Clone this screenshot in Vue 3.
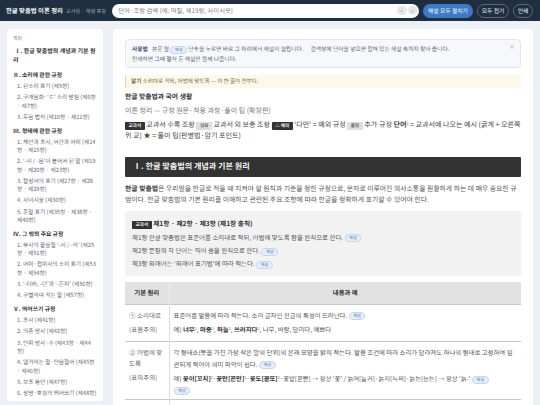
<script setup>
const toc = [
  { h: 'Ⅱ. 소리에 관한 규정', items: ['1. 된소리 표기 (제5항)', '2. 구개음화·‘ㄷ’ 소리 받침 (제6항 · 제7항)', '3. 두음 법칙 (제10항 · 제11항)'] },
  { h: 'Ⅲ. 형태에 관한 규정', items: ['1. 체언과 조사, 어간과 어미 (제14항 · 제15항)', '2. ‘-이 / -음’이 붙어서 된 말 (제19항 · 제20항 · 제23항)', '3. 합성어의 표기 (제27항 · 제28항 · 제29항)', '4. 사이시옷 (제30항)', '5. 준말 표기 (제35항 · 제38항 · 제40항)'] },
  { h: 'Ⅳ. 그 밖의 주요 규정', items: ['1. 부사의 끝음절 ‘-이 / -히’ (제25항 · 제51항)', '2. 어미·접미사의 소리 표기 (제53항 · 제54항)', '3. ‘-더라, -던’과 ‘-든지’ (제56항)', '4. 구별하여 적는 말 (제57항)'] },
  { h: 'Ⅴ. 띄어쓰기 규정', items: ['1. 조사 (제41항)', '2. 의존 명사 (제42항)', '3. 단위 명사·수 (제43항 · 제44항)', '4. 열거하는 말·단음절어 (제45항 · 제46항)', '5. 보조 용언 (제47항)', '6. 성명·호칭의 띄어쓰기 (제48항)'] }
]
</script>

<template>
  <div class="page">
    <header class="top">
      <div class="brand"><strong>한글 맞춤법 이론 정리</strong><span>교사용 · 해설 포함</span></div>
      <div class="search">
        <span class="ph">단어·조항 검색 (예: 며칠, 제19항, 사이시옷)</span>
        <span class="arrow">‹</span><span class="arrow">›</span>
      </div>
      <button class="btn primary">해설 모두 펼치기</button>
      <button class="btn ghost">모두 접기</button>
      <button class="btn ghost print">인쇄</button>
    </header>
    <div class="body">
      <aside class="side">
        <div class="side-title">목차</div>
        <div class="first">Ⅰ. 한글 맞춤법의 개념과 기본 원리</div>
        <section v-for="g in toc" :key="g.h">
          <div class="group">{{ g.h }}</div>
          <div v-for="i in g.items" :key="i" class="item">{{ i }}</div>
        </section>
      </aside>
      <main class="main">
        <div class="tip">
          <p><b>사용법</b><span class="gap"></span>본문 옆 <span class="chip">해설</span> 단추를 누르면 바로 그 자리에서 해설이 열립니다.<span class="gap wide"></span>검색창에 단어를 넣으면 접혀 있는 해설 속까지 찾아 줍니다.</p>
          <p>인쇄하면 그때 펼쳐 둔 해설만 함께 나옵니다.</p>
          <span class="close">×</span>
        </div>
        <div class="note"><b>알기</b> 소리대로 적되, 어법에 맞도록 — 이 한 줄이 전부다.</div>
        <h2 class="title">한글 맞춤법과 국어 생활</h2>
        <div class="sub">이론 정리 — 규정 원문·적용 과정·풀이 팁 (확장판)</div>
        <p class="legend"><span class="tag dark">교과서</span> 교과서 수록 조항 <span class="tag gray">심화</span> 교과서 외 보충 조항 <span class="tag dark">△ 예외</span> ‘다만’ = 예외 규정 <span class="tag gray">붙임</span> 추가 규정 <b>단어</b><sup>2</sup> = 교과서에 나오는 예시 (굵게 + 오른쪽 위 교) ★ = 풀이 팁(판별법·암기 포인트)</p>
        <h2 class="band">Ⅰ. 한글 맞춤법의 개념과 기본 원리</h2>
        <p class="para"><b>한글 맞춤법</b>은 우리말을 한글로 적을 때 지켜야 할 원칙과 기준을 정한 규정으로, 문자로 이루어진 의사소통을 원활하게 하는 데 매우 중요한 규범이다. 한글 맞춤법의 기본 원리를 이해하고 관련된 주요 조항에 따라 한글을 정확하게 표기할 수 있어야 한다.</p>
        <div class="rule">
          <div class="rule-h"><span class="tag dark">교과서</span> <b>제1항 · 제2항 · 제3항 (제1장 총칙)</b></div>
          <p>제1항 한글 맞춤법은 표준어를 소리대로 적되, 어법에 맞도록 함을 원칙으로 한다. <span class="chip">해설</span></p>
          <p>제2항 문장의 각 단어는 띄어 씀을 원칙으로 한다. <span class="chip">해설</span></p>
          <p>제3항 외래어는 ‘외래어 표기법’에 따라 적는다. <span class="chip">해설</span></p>
        </div>
        <table class="tbl">
          <colgroup><col class="c1" /><col /></colgroup>
          <thead><tr><th>기본 원리</th><th>내용과 예</th></tr></thead>
          <tbody>
            <tr>
              <td class="lab"><p>① 소리대로</p><p>(표음주의)</p></td>
              <td><p>표준어를 발음에 따라 적는다. 소리 글자인 한글의 특성이 드러난다. <span class="chip">해설</span></p>
                <p>예) <b>너무</b><sup>2</sup>, <b>마중</b><sup>2</sup>, <b>하늘</b><sup>2</sup>, <b>쓰러지다</b><sup>2</sup>, 나무, 바람, 달리다, 예쁘다</p></td>
            </tr>
            <tr>
              <td class="lab"><p>② 어법에 맞도록</p><p>(표의주의)</p></td>
              <td><p>각 형태소(뜻을 가진 가장 작은 말의 단위)의 본래 모양을 밝혀 적는다. 발음 조건에 따라 소리가 달라져도 하나의 형태로 고정하여 일관되게 적어야 의미 파악이 쉽다. <span class="chip">해설</span></p>
                <p class="ex">예) <b>꽃이[꼬치]</b><sup>2</sup>·<b>꽃만[꼰만]</b><sup>2</sup>·<b>꽃도[꼳또]</b><sup>2</sup>·꽃밭[꼳빧] → 항상 ‘꽃’ / 늙어[늘거]·늙지[늑찌]·늙는[능는] → 항상 ‘늙-’ <span class="chip">해설</span><br /><span class="chip">해설</span></p></td>
            </tr>
            <tr class="last"><td class="lab"></td><td></td></tr>
          </tbody>
        </table>
      </main>
    </div>
  </div>
</template>

<style>
html, body { margin: 0; background: #edf0f4; overflow: hidden; }
</style>

<style scoped>
.page { width: 540px; height: 405px; overflow: hidden; display: flex; flex-direction: column; background: #edf0f4; font-family: "Noto Sans CJK KR", "Noto Sans", sans-serif; color: #333; text-rendering: geometricPrecision; }
.top { flex: none; height: 21px; box-sizing: border-box; background: #1f2e40; display: flex; align-items: center; gap: 4px; padding: 0 7px 0 6px; }
.brand { display: flex; align-items: baseline; gap: 3px; white-space: nowrap; margin-right: 2px; }
.brand strong { color: #f2f4f7; font-size: 6.35px; font-weight: 700; }
.brand span { color: #a3adb9; font-size: 5.25px; }
.search { flex: 1; height: 14px; background: #fff; border-radius: 7px; display: flex; align-items: center; gap: 1px; padding: 0 2px 0 6px; min-width: 0; }
.ph { flex: 1; font-size: 6.35px; color: #7b8490; white-space: nowrap; }
.arrow { width: 9.5px; height: 9.5px; border-radius: 50%; background: #e4e7eb; color: #5c6570; font-size: 6px; line-height: 9px; text-align: center; }
.btn { flex: none; height: 14px; box-sizing: border-box; border-radius: 7px; padding: 0; font: 500 5.8px "Noto Sans CJK KR", sans-serif; white-space: nowrap; text-rendering: geometricPrecision; }
.primary { width: 50px; background: #3f79c6; color: #dbe7f6; border: 0; }
.ghost { width: 32px; background: transparent; border: 0.6px solid #5b6876; color: #d5dae0; }
.print { width: 20px; }
.body { flex: 1; min-height: 0; display: flex; align-items: flex-start; gap: 10px; padding: 8px 7px 4px; }
.side { flex: none; width: 96px; height: 372px; box-sizing: border-box; overflow: hidden; background: #fff; border-radius: 3px; padding: 5px 5px; }
.side-title { font-size: 5px; color: #7b8490; line-height: 9px; margin: 0 0 4px 1px; }
.first { font-size: 6px; font-weight: 700; color: #333; line-height: 8.5px; padding-left: 1px; text-indent: 1.5px; margin-bottom: 7px; }
.group { font-size: 5.8px; font-weight: 700; color: #333; line-height: 8.5px; margin: 4px 0 2.5px 1px; }
.item { font-size: 5.7px; color: #5e6670; line-height: 8.3px; padding-left: 5px; margin-bottom: 3px; padding-right: 1.5px; }
section { margin-bottom: 5.5px; }
.main { flex: 1; min-width: 0; height: 380px; box-sizing: border-box; overflow: hidden; background: #fff; border-radius: 3px 3px 0 0; padding: 10px 12px; }
.tip { position: relative; box-sizing: border-box; height: 29px; background: #f6f8fb; border: 0.5px solid #e3e7ec; border-radius: 4px; padding: 4px 6px; margin-bottom: 7px; }
.tip p { margin: 0; font-size: 5.75px; line-height: 10px; color: #606873; white-space: nowrap; }
.tip b { color: #3d5573; }
.gap { display: inline-block; width: 4px; }
.gap.wide { width: 7px; }
.close { position: absolute; right: 5px; top: 3px; font-size: 6px; line-height: 8px; color: #9aa3ae; }
.chip { display: inline-block; background: #e7eefb; border: 0.5px solid #c6d6ee; color: #5174aa; border-radius: 4px; font-size: 4.2px; line-height: 6px; padding: 0 3.5px; vertical-align: 0.3px; }
.note { height: 13px; box-sizing: border-box; background: #fdf8e9; border-left: 1px solid #ecd9a3; font-size: 5.6px; line-height: 13px; color: #7a6a45; padding-left: 5px; margin-bottom: 3px; }
.title { margin: 0; font-size: 6.8px; line-height: 11px; font-weight: 700; color: #333; }
.sub { font-size: 7px; line-height: 11px; color: #757575; margin-top: 4px; }
.legend { margin: 3px 0 0; font-size: 7.05px; line-height: 11px; color: #444; }
.tag { display: inline-block; font-size: 4.6px; line-height: 8px; padding: 0 3.5px; border-radius: 0.8px; vertical-align: 0.4px; }
.tag.dark { background: #333; color: #eee; font-weight: 700; }
.tag.gray { background: #dedede; color: #666; font-weight: 700; }
sup { font-size: 3.6px; line-height: 0; vertical-align: 2.5px; }
.band { margin: 15px 0 0; height: 20px; box-sizing: border-box; background: #333; color: #f2f2f2; font-size: 8.1px; line-height: 20px; font-weight: 700; padding-left: 8px; border-radius: 1px; }
.para { margin: 6px 0 0; font-size: 6.85px; line-height: 11px; color: #555; }
.para b { color: #333; }
.rule { height: 65px; box-sizing: border-box; background: #f2f2f2; border-radius: 3px; padding: 7px 7px; margin-top: 6px; }
.rule-h { font-size: 6.7px; line-height: 10px; color: #333; margin-bottom: 2px; }
.rule p { margin: 0; font-size: 6.45px; line-height: 13.2px; color: #555; white-space: nowrap; }
.tbl { width: 100%; border-collapse: collapse; margin-top: 6px; table-layout: fixed; }
.c1 { width: 44px; }
.tbl th { height: 21.5px; background: #e2e2e2; font-size: 6.4px; color: #333; font-weight: 700; text-align: center; padding: 0; }
.tbl th + th { border-left: 0.5px solid #ececec; }
.tbl td { border-top: 0.5px solid #c9c9c9; padding: 5px 4px 2.5px; font-size: 6.4px; line-height: 11.5px; color: #555; vertical-align: top; }
.tbl td + td { border-left: 0.5px solid #dcdcdc; }
.tbl p { margin: 0 0 3px; }
.tbl p:last-child { margin-bottom: 0; }
.tbl .ex { font-size: 6.3px; }
.tbl b { color: #333; }
.tbl .lab { color: #6b6b6b; font-size: 6.5px; line-height: 10.5px; }
.tbl .lab p { margin-bottom: 4px; }
.last td { height: 30px; }
</style>
